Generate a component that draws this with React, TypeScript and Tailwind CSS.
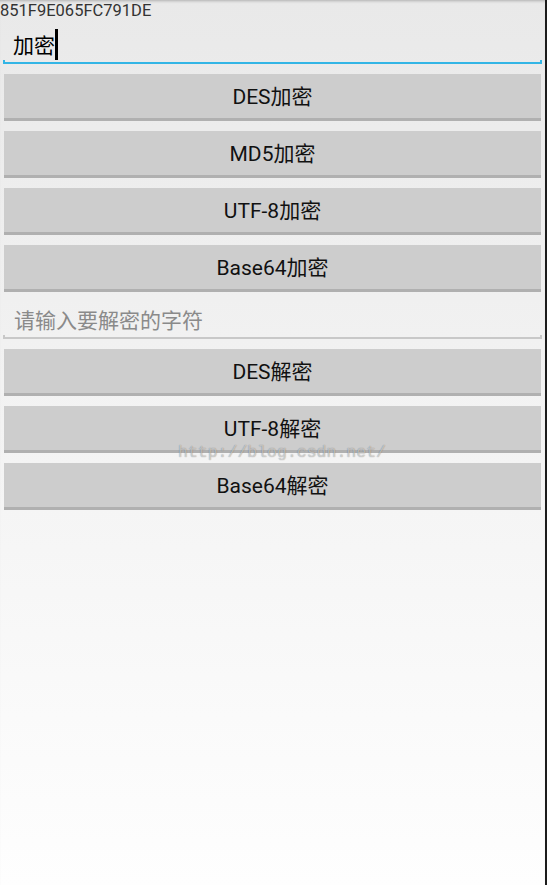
import React from 'react';

const font = { fontFamily: 'Roboto, "Noto Sans CJK SC", sans-serif' };

const encryptButtons = ['DES加密', 'MD5加密', 'UTF-8加密', 'Base64加密'];
const decryptButtons = ['DES解密', 'UTF-8解密', 'Base64解密'];

function Button({ label }: { label: string }) {
    return (
        <button
            type="button"
            className="mx-[4px] flex h-[47px] items-center justify-center border-b-[3px] border-[#b0b0b0] bg-[#cdcdcd] pt-[3px] text-[21px] text-[#111]"
        >
            {label}
        </button>
    );
}

function Underline({ color, thick }: { color: string; thick: string }) {
    return (
        <div className="mx-[3px] flex h-[4px] items-end">
            <div className={`h-[4px] w-[2px] ${color}`} />
            <div className={`flex-1 ${thick} ${color}`} />
            <div className={`h-[4px] w-[2px] ${color}`} />
        </div>
    );
}

export default function App() {
    return (
        <div className="relative flex min-h-[885px] bg-gradient-to-b from-[#e9e9e9] to-[#fefefe]" style={font}>
            <div className="flex flex-1 flex-col shadow-[inset_0_3px_3px_-2px_rgba(0,0,0,0.25)]">
                <div className="h-[22px] text-[16.5px] leading-[22px] text-[#333]">851F9E065FC791DE</div>

                {/* encrypt input */}
                <div className="flex h-[38px] items-start pl-[13px]">
                    <span className="pt-[10px] text-[21px] leading-[28px] text-black">加密</span>
                    <span className="mt-[7px] h-[31px] w-[3px] bg-black" />
                </div>
                <Underline color="bg-[#33b5e5]" thick="h-[2px]" />

                <div className="mt-[10px] flex flex-col gap-[10px]">
                    {encryptButtons.map((b) => (
                        <Button key={b} label={b} />
                    ))}
                </div>

                {/* decrypt input */}
                <div className="mt-[10px] h-[33px] pl-[14px] pt-[5px] text-[21px] leading-[28px] text-[#8a8a8a]">
                    请输入要解密的字符
                </div>
                <Underline color="bg-[#c8c8c8]" thick="h-[2px]" />

                <div className="mt-[10px] flex flex-col gap-[10px]">
                    {decryptButtons.map((b) => (
                        <Button key={b} label={b} />
                    ))}
                </div>
            </div>
            <div className="w-[2px] bg-[#1c1c1c]" />

            <div
                className="pointer-events-none absolute left-[178px] top-[444px] text-[16.5px] leading-[18px] text-white/50 [text-shadow:0_0_1px_rgba(0,0,0,0.45)]"
                style={{ fontFamily: '"Liberation Mono", monospace' }}
            >
                http://blog.csdn.net/
            </div>
        </div>
    );
}
